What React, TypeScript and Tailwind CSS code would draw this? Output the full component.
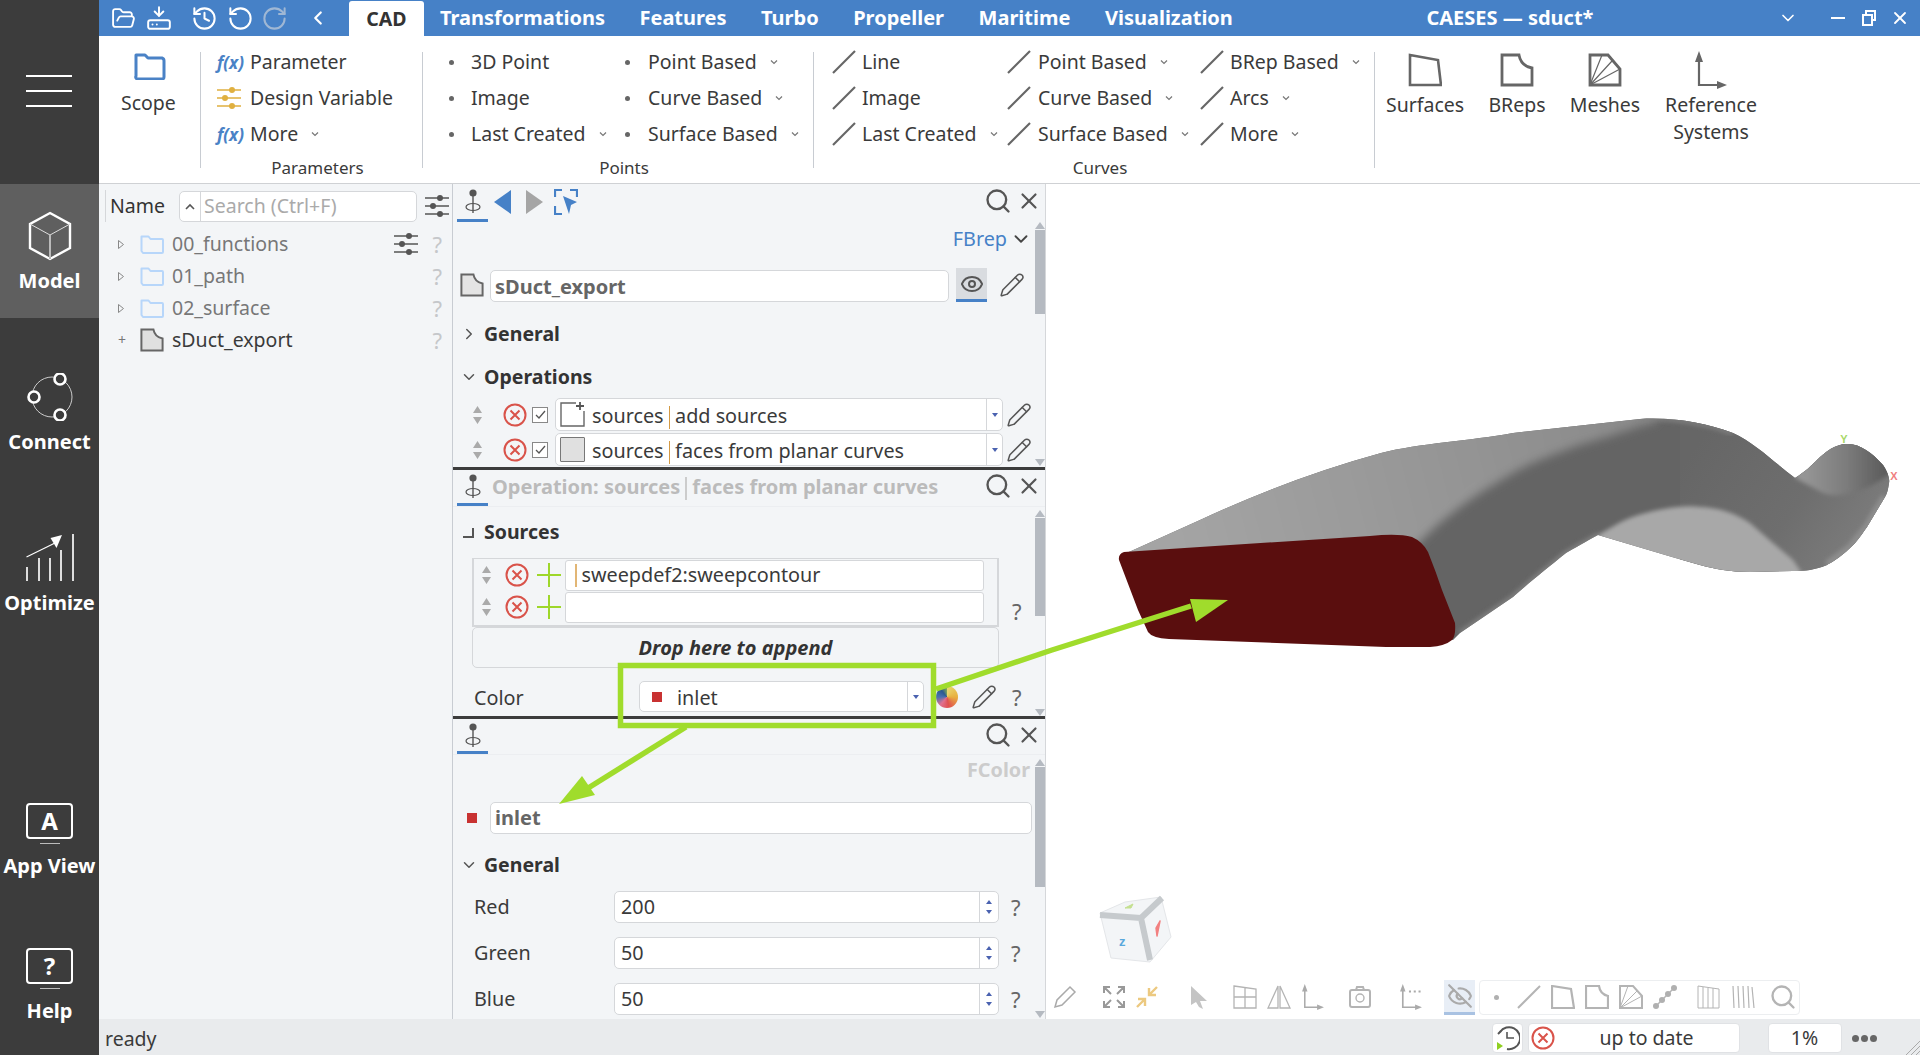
import type { ReactNode } from 'react';
import { Eye, EyeOff, FolderOpen, HardDriveDownload, History, Pencil, RotateCcw, RotateCw, Search, X, ChevronLeft, ChevronDown, ChevronRight } from 'lucide-react';

const Chev = ({ className = 'ml-[13px]' }: { className?: string }) => (
    <svg width="8" height="6" viewBox="0 0 8 6" className={className}>
        <path d="M1 1.5 4 4.5 7 1.5" fill="none" stroke="#777" strokeWidth="1.2" />
    </svg>
);

const Fx = () => <span className="italic font-bold text-[17px] text-[#4a82c6] leading-none">f(x)</span>;

const Dot = () => <span className="ml-[8px] block w-[5px] h-[5px] rounded-full bg-[#666]" />;

const Slash = () => (
    <svg width="24" height="24" viewBox="0 0 24 24">
        <path d="M1 23 23 1" stroke="#666" strokeWidth="2.2" />
    </svg>
);

const Sliders = ({ color = '#555' }: { color?: string }) => (
    <svg width="24" height="22" viewBox="0 0 24 22">
        <path d="M0 3h24M0 11h24M0 19h24" stroke={color} strokeWidth="1.4" />
        <circle cx="15" cy="3" r="3" fill={color} />
        <circle cx="8" cy="11" r="3" fill={color} />
        <circle cx="15" cy="19" r="3" fill={color} />
    </svg>
);

const RibbonRow = ({ icon, label, chev, box = 'w-[30px]' }: { icon: ReactNode; label: string; chev?: boolean; box?: string }) => (
    <div className="h-[36px] flex items-center whitespace-nowrap">
        <span className={`${box} flex items-center shrink-0`}>{icon}</span>
        <span>{label}</span>
        {chev && <Chev />}
    </div>
);

const GroupSep = () => <div className="mt-[16px] h-[116px] w-px bg-[#c8ccd2] shrink-0" />;

const SurfaceIcon = () => (
    <svg width="34" height="34" viewBox="0 0 34 34">
        <path d="M2 2 30 7 33 32 2 32Z" fill="none" stroke="#666" strokeWidth="2.6" />
    </svg>
);
const BrepIcon = ({ size = 34, fill = 'none' }: { size?: number; fill?: string }) => (
    <svg width={size} height={size} viewBox="0 0 34 34">
        <path d="M2 2H19Q21 13 32 15V32H2Z" fill={fill} stroke="#666" strokeWidth="2.8" />
    </svg>
);
const MeshIcon = () => (
    <svg width="34" height="34" viewBox="0 0 34 34">
        <path d="M2 2H20L32 16V32H2Z" fill="none" stroke="#666" strokeWidth="2.8" />
        <path d="M2 32 14 2M2 32 24 8M2 32 32 16" stroke="#666" strokeWidth="1.2" />
    </svg>
);
const AxesIcon = ({ w = 32, h = 38, color = '#666' }: { w?: number; h?: number; color?: string }) => (
    <svg width={w} height={h} viewBox="0 0 32 38">
        <path d="M4 10V34H26" fill="none" stroke={color} strokeWidth="2.2" />
        <path d="M4 0 8 11H0ZM32 34 22 38V30Z" fill={color} />
    </svg>
);

const BigTool = ({ icon, label, className }: { icon: ReactNode; label: ReactNode; className: string }) => (
    <div className={`${className} pt-[16px] flex flex-col items-center text-center leading-[27px]`}>
        <div className="h-[36px] flex items-center">{icon}</div>
        <div className="mt-[3px]">{label}</div>
    </div>
);

function Ribbon() {
    return (
        <div className="h-[148px] bg-white border-b border-[#cfd1d4] flex text-[19.5px] text-[#3a3a3a] shrink-0">
            <div className="w-[101px] pt-[16px] pl-[35px] shrink-0">
                <svg width="32" height="28" viewBox="0 0 32 28">
                    <path d="M2 24V3h9l3 3h14a3 3 0 0 1 2 3v16a2 2 0 0 1-2 2H4a2 2 0 0 1-2-3Z" fill="none" stroke="#4a82c6" strokeWidth="3" strokeLinejoin="round" />
                </svg>
                <div className="mt-[8px] -ml-[13px]">Scope</div>
            </div>
            <GroupSep />
            <div className="w-[221px] shrink-0">
                <div className="h-[116px] pt-[8px] pl-[16px]">
                    <RibbonRow box="w-[33px]" icon={<Fx />} label="Parameter" />
                    <RibbonRow box="w-[33px]" icon={<Sliders color="#e0b040" />} label="Design Variable" />
                    <RibbonRow box="w-[33px]" icon={<Fx />} label="More" chev />
                </div>
                <div className="mt-[4px] pl-[12px] text-center text-[17px] leading-[24px]">Parameters</div>
            </div>
            <GroupSep />
            <div className="w-[390px] shrink-0">
                <div className="h-[116px] pt-[8px] pl-[18px] flex">
                    <div className="w-[176px]">
                        <RibbonRow icon={<Dot />} label="3D Point" />
                        <RibbonRow icon={<Dot />} label="Image" />
                        <RibbonRow icon={<Dot />} label="Last Created" chev />
                    </div>
                    <div>
                        <RibbonRow box="w-[31px]" icon={<Dot />} label="Point Based" chev />
                        <RibbonRow box="w-[31px]" icon={<Dot />} label="Curve Based" chev />
                        <RibbonRow box="w-[31px]" icon={<Dot />} label="Surface Based" chev />
                    </div>
                </div>
                <div className="mt-[4px] pl-[12px] text-center text-[17px] leading-[24px]">Points</div>
            </div>
            <GroupSep />
            <div className="w-[560px] shrink-0">
                <div className="h-[116px] pt-[8px] pl-[18px] flex">
                    <div className="w-[175px]">
                        <RibbonRow icon={<Slash />} label="Line" />
                        <RibbonRow icon={<Slash />} label="Image" />
                        <RibbonRow icon={<Slash />} label="Last Created" chev />
                    </div>
                    <div className="w-[193px]">
                        <RibbonRow box="w-[31px]" icon={<Slash />} label="Point Based" chev />
                        <RibbonRow box="w-[31px]" icon={<Slash />} label="Curve Based" chev />
                        <RibbonRow box="w-[31px]" icon={<Slash />} label="Surface Based" chev />
                    </div>
                    <div>
                        <RibbonRow icon={<Slash />} label="BRep Based" chev />
                        <RibbonRow icon={<Slash />} label="Arcs" chev />
                        <RibbonRow icon={<Slash />} label="More" chev />
                    </div>
                </div>
                <div className="mt-[4px] pl-[12px] text-center text-[17px] leading-[24px]">Curves</div>
            </div>
            <GroupSep />
            <BigTool className="ml-[10px] w-[80px]" icon={<SurfaceIcon />} label="Surfaces" />
            <BigTool className="ml-[12px] w-[80px]" icon={<BrepIcon />} label="BReps" />
            <BigTool className="ml-[8px] w-[80px]" icon={<MeshIcon />} label="Meshes" />
            <BigTool className="ml-[16px] w-[100px]" icon={<AxesIcon />} label={<>Reference<br />Systems</>} />
        </div>
    );
}

function Header() {
    return (
        <div className="h-[36px] bg-[#4681c7] flex items-center text-white shrink-0">
            <div className="ml-[12px] flex items-center">
                <FolderOpen size={25} strokeWidth={1.8} />
                <HardDriveDownload size={26} strokeWidth={1.8} className="ml-[10px]" />
                <History size={27} strokeWidth={1.8} className="ml-[19px]" />
                <RotateCcw size={27} strokeWidth={1.8} className="ml-[9px]" />
                <RotateCw size={27} strokeWidth={1.8} className="ml-[7px] text-[#9fb7d4]" />
                <ChevronLeft size={22} strokeWidth={2.4} className="ml-[19px]" />
            </div>
            <div className="ml-[20px] w-[75px] h-[35px] mt-[1px] bg-white rounded-t-[3px] text-[#333] font-bold text-[19.5px] flex items-center justify-center">CAD</div>
            <div className="ml-[16px] flex gap-[34.5px] font-bold text-[20px]">
                <span>Transformations</span>
                <span>Features</span>
                <span>Turbo</span>
                <span>Propeller</span>
                <span>Maritime</span>
                <span>Visualization</span>
            </div>
            <div className="ml-[193.5px] font-bold text-[20px] whitespace-nowrap">CAESES — sduct*</div>
            <ChevronDown size={20} strokeWidth={2} className="ml-[185px]" />
            <span className="ml-[33px] w-[14px] h-[2px] bg-white" />
            <svg width="16" height="16" viewBox="0 0 16 16" className="ml-[16px]">
                <path d="M5 4V1h9v9h-3M2 5h9v10H2Z" fill="none" stroke="#fff" strokeWidth="2" />
            </svg>
            <X size={20} strokeWidth={2.2} className="ml-[13px]" />
        </div>
    );
}

const SideItem = ({ icon, label, className = '' }: { icon: ReactNode; label: string; className?: string }) => (
    <div className={`flex flex-col items-center text-white font-bold text-[20px] leading-[26px] ${className}`}>
        {icon}
        <span className="whitespace-nowrap">{label}</span>
    </div>
);

const ScreenIcon = ({ children }: { children: ReactNode }) => (
    <div className="flex flex-col items-center mb-[9px]">
        <div className="w-[47px] h-[36px] rounded-[4px] border-2 border-white flex items-center justify-center text-[24px] leading-none">{children}</div>
        <span className="mt-[4px] block w-[20px] h-[1px] bg-[#bbb]" />
    </div>
);

function Sidebar() {
    return (
        <aside className="w-[99px] h-full bg-[#3c3c3c] flex flex-col shrink-0">
            <div className="h-[184px] pt-[75px] pl-[26px]">
                <div className="w-[46px] h-[2px] bg-white" />
                <div className="mt-[13px] w-[46px] h-[2px] bg-white" />
                <div className="mt-[13px] w-[46px] h-[2px] bg-white" />
            </div>
            <SideItem
                className="h-[134px] bg-[#5f5f5f] pt-[27px]"
                icon={
                    <svg width="44" height="50" viewBox="0 0 44 50" className="mb-[7px]">
                        <path d="M22 2 42 13V37L22 48 2 37V13Z" fill="none" stroke="#fff" strokeWidth="2.4" />
                        <path d="M2 13 22 24 42 13" fill="none" stroke="#ddd" strokeWidth="1" />
                        <path d="M22 24V48" stroke="#bbb" strokeWidth="2" />
                    </svg>
                }
                label="Model"
            />
            <SideItem
                className="mt-[55px]"
                icon={
                    <svg width="48" height="48" viewBox="0 0 48 48" className="mb-[8px]">
                        <circle cx="26" cy="24" r="20" fill="none" stroke="#ccc" strokeWidth="1" />
                        <g fill="#3c3c3c" stroke="#fff" strokeWidth="2.6">
                            <circle cx="34" cy="6" r="5.5" />
                            <circle cx="8" cy="24" r="5.5" />
                            <circle cx="34" cy="42" r="5.5" />
                        </g>
                    </svg>
                }
                label="Connect"
            />
            <SideItem
                className="mt-[79px]"
                icon={
                    <svg width="48" height="48" viewBox="25 534 48 48" className="mb-[8px]">
                        <path d="M26 581V567M38 581V558M49 581V558M60 581V550M72 581V534" stroke="#ddd" strokeWidth="2" />
                        <path d="M25.5 557 54 543" stroke="#fff" strokeWidth="1.2" />
                        <path d="M61 535 49.5 538 55.5 548Z" fill="#fff" />
                    </svg>
                }
                label="Optimize"
            />
            <SideItem className="mt-[187px]" icon={<ScreenIcon>A</ScreenIcon>} label="App View" />
            <SideItem className="mt-[69px]" icon={<ScreenIcon>?</ScreenIcon>} label="Help" />
        </aside>
    );
}

const Q = ({ className = '', color = 'text-[#c5c7ca]' }: { className?: string; color?: string }) => (
    <span className={`${color} text-[22px] leading-none ${className}`}>?</span>
);

const TreeFolder = () => (
    <svg width="24" height="20" viewBox="0 0 24 20">
        <path d="M1.5 17V2.5h7l2 2.5H22a1 1 0 0 1 1 1V18a1 1 0 0 1-1 1H3Z" fill="none" stroke="#b7d6fa" strokeWidth="2" strokeLinejoin="round" />
    </svg>
);

const TreeRow = ({ label, folder, last, sliders }: { label: string; folder?: boolean; last?: boolean; sliders?: boolean }) => (
    <div className="h-[32px] flex items-center">
        <span className="w-[19px] ml-[19px] flex items-center">
            {last ? (
                <span className="text-[#777] text-[14px] leading-none">+</span>
            ) : (
                <svg width="6" height="9" viewBox="0 0 6 9">
                    <path d="M.5.5 5.5 4.5.5 8.5Z" fill="none" stroke="#888" />
                </svg>
            )}
        </span>
        <span className="ml-[3px] w-[32px] flex">{folder ? <TreeFolder /> : <BrepIcon size={24} fill="#e0e0e0" />}</span>
        <span className={folder ? 'text-[#777]' : 'text-[#3a3a3a]'}>{label}</span>
        <span className="ml-auto w-[24px] flex">{sliders && <Sliders />}</span>
        <Q className="ml-[14px] mr-[10px]" />
    </div>
);

function Tree() {
    return (
        <div className="w-[354px] shrink-0 border-r border-[#c8ccd2] text-[19.5px]">
            <div className="h-[38px] pt-[6px] flex items-center">
                <span className="ml-[6px] w-px h-[32px] bg-[#d5d7da]" />
                <span className="ml-[4px] text-[#333]">Name</span>
                <div className="ml-[14px] w-[238px] h-[31px] bg-white border border-[#d5d7da] rounded-[5px] flex items-center">
                    <span className="w-[21px] h-full border-r border-[#d5d7da] flex items-center justify-center">
                        <svg width="10" height="7" viewBox="0 0 10 7">
                            <path d="M1 6 5 2 9 6" fill="none" stroke="#555" strokeWidth="1.6" />
                        </svg>
                    </span>
                    <span className="ml-[3px] text-[#aaa]">Search (Ctrl+F)</span>
                </div>
                <span className="ml-[8px] flex"><Sliders /></span>
            </div>
            <div className="mt-[6px]">
                <TreeRow label="00_functions" folder sliders />
                <TreeRow label="01_path" folder />
                <TreeRow label="02_surface" folder />
                <TreeRow label="sDuct_export" last />
            </div>
        </div>
    );
}

const Anchor = () => (
    <svg width="16" height="25" viewBox="0 0 16 25">
        <circle cx="8" cy="4" r="3.6" fill="#555" />
        <path d="M8 7V24" stroke="#555" strokeWidth="1.4" />
        <ellipse cx="8" cy="18" rx="7" ry="3.5" fill="none" stroke="#555" strokeWidth="1.2" />
    </svg>
);

const Tools = ({ h, children }: { h: string; children?: ReactNode }) => (
    <div className={`${h} flex items-stretch shrink-0`}>
        <div className="ml-[4px] w-[31px] border-b-3 border-[#4681c7] flex items-center justify-center"><Anchor /></div>
        {children}
        <div className="ml-auto flex items-center text-[#555] -mt-[4px]">
            <Search size={28} strokeWidth={2} />
            <X size={26} strokeWidth={2} className="ml-[4px] mr-[3px]" />
        </div>
    </div>
);

const ScrollCol = ({ top, thumb, spacer }: { top: string; thumb: string; spacer?: string }) => (
    <div className={`w-[10px] shrink-0 flex flex-col items-center ${top} ${spacer ?? ''}`}>
        <span className="block border-x-[5px] border-x-transparent border-b-[7px] border-b-[#b5bac1]" />
        <span className={`block w-[10px] bg-[#b5bac1] ${thumb}`} />
        <span className="mt-auto block border-x-[5px] border-x-transparent border-t-[7px] border-t-[#b5bac1]" />
    </div>
);

const SectionHead = ({ open, label, className = '' }: { open?: boolean; label: string; className?: string }) => (
    <div className={`h-[24px] flex items-center font-bold text-[19.5px] text-[#333] ${className}`}>
        <span className="w-[31px] pl-[7px] flex">
            {open ? <ChevronDown size={18} strokeWidth={2} className="text-[#555]" /> : <ChevronRight size={18} strokeWidth={2} className="text-[#555]" />}
        </span>
        {label}
    </div>
);

const RedX = ({ size = 24 }: { size?: number }) => (
    <svg width={size} height={size} viewBox="0 0 24 24">
        <circle cx="12" cy="12" r="10.5" fill="none" stroke="#d9534a" strokeWidth="2" />
        <path d="M7.5 7.5 16.5 16.5M16.5 7.5 7.5 16.5" stroke="#d9534a" strokeWidth="2" />
    </svg>
);

const UpDown = () => (
    <svg width="11" height="18" viewBox="0 0 11 18">
        <path d="M5.5 0 10 7H1ZM5.5 18 1 11H10Z" fill="#aaa" />
    </svg>
);

const MiniDrop = () => (
    <svg width="6" height="4" viewBox="0 0 6 4">
        <path d="M0 0H6L3 4Z" fill="#4a62b0" />
    </svg>
);

const Pen = ({ color = '#555', size = 26 }: { color?: string; size?: number }) => (
    <Pencil size={size} strokeWidth={1.4} color={color} />
);

const OpRow = ({ icon, label }: { icon: ReactNode; label: ReactNode }) => (
    <div className="h-[33px] flex items-center shrink-0">
        <span className="ml-[19px] flex"><UpDown /></span>
        <span className="ml-[20px] flex"><RedX /></span>
        <span className="ml-[5px] w-[16px] h-[16px] border border-[#888] bg-white flex items-center justify-center">
            <svg width="12" height="12" viewBox="0 0 12 12"><path d="M2 6 5 9 11 2" fill="none" stroke="#555" strokeWidth="1.3" /></svg>
        </span>
        <div className="ml-[7px] w-[448px] h-[33px] bg-white border border-[#d5d7da] rounded-[5px] flex items-center">
            <span className="ml-[4px] w-[25px] h-[25px] flex">{icon}</span>
            <span className="ml-[7px] pt-[2px] text-[#3a3a3a] whitespace-nowrap">{label}</span>
            <span className="ml-auto w-[16px] h-full border-l border-[#d5d7da] flex items-center justify-center"><MiniDrop /></span>
        </div>
        <span className="ml-[3px] flex"><Pen /></span>
    </div>
);

const Bar = () => <span className="inline-block w-[1.5px] h-[23px] mx-[5px] align-middle bg-[#d39a45]" />;

const SourceRow = ({ text }: { text?: ReactNode }) => (
    <div className="h-[32px] flex items-center">
        <span className="ml-[7px] flex"><UpDown /></span>
        <span className="ml-[13px] flex"><RedX /></span>
        <svg width="24" height="24" viewBox="0 0 24 24" className="ml-[8px]">
            <path d="M12 0V24M0 12H24" stroke="#9ed72a" strokeWidth="2" />
        </svg>
        <div className="ml-[4px] w-[419px] h-[31px] bg-white border border-[#d5d7da] rounded-[3px] pl-[9px] flex items-center whitespace-nowrap">{text}</div>
    </div>
);

const NumRow = ({ label, value, className = '' }: { label: string; value: string; className?: string }) => (
    <div className={`h-[32px] flex items-center shrink-0 ${className}`}>
        <span className="ml-[21px] w-[140px] text-[#3a3a3a]">{label}</span>
        <div className="w-[385px] h-[32px] bg-white border border-[#d5d7da] rounded-[5px] pl-[6px] flex items-center">
            {value}
            <span className="ml-auto w-[19px] h-full border-l border-[#d5d7da] flex flex-col items-center justify-around py-[5px]">
                <span className="rotate-180 flex"><MiniDrop /></span>
                <MiniDrop />
            </span>
        </div>
        <Q className="ml-[12px]" color="text-[#666]" />
    </div>
);

function Inspector() {
    return (
        <div className="w-[593px] shrink-0 border-r border-[#d5d7da] flex flex-col text-[19.8px] text-[#3a3a3a]">
            {/* object panel */}
            <div className="h-[283px] flex flex-col shrink-0 overflow-hidden">
                <Tools h="h-[38px]">
                    <svg width="18" height="24" viewBox="0 0 18 24" className="ml-[6px] self-center -mt-[2px]"><path d="M17 0V24L0 12Z" fill="#4681c7" /></svg>
                    <svg width="18" height="24" viewBox="0 0 18 24" className="ml-[13px] self-center -mt-[2px]"><path d="M1 0V24L18 12Z" fill="#a5a5a5" /></svg>
                    <svg width="24" height="26" viewBox="0 0 24 26" className="ml-[11px] self-center -mt-[2px]">
                        <path d="M1 8V1H8M16 1H23V8M1 17V25H8" fill="none" stroke="#4681c7" strokeWidth="2.2" />
                        <path d="M9 7 23 13 17 16 15 25Z" fill="#4681c7" />
                    </svg>
                </Tools>
                <div className="flex-1 flex min-h-0">
                    <div className="w-[582px] shrink-0">
                        <div className="h-[32px] mt-[1px] flex items-center justify-end text-[#4681c7]">
                            FBrep
                            <ChevronDown size={22} strokeWidth={2} className="ml-[3px] mr-[3px] text-[#444]" />
                        </div>
                        <div className="mt-[13px] h-[34px] flex items-center">
                            <span className="ml-[7px] flex"><BrepIcon size={24} fill="#e4e4e4" /></span>
                            <div className="ml-[6px] mt-[2px] w-[459px] h-[32px] pt-[1px] bg-white border border-[#d5d7da] rounded-[5px] pl-[4px] flex items-center font-bold text-[20px] text-[#666]">sDuct_export</div>
                            <div className="ml-[7px] w-[31px] h-[34px] bg-[#d9dce0] border-b-3 border-[#4681c7] flex items-center justify-center"><Eye size={24} strokeWidth={2} color="#555" /></div>
                            <span className="ml-[12px] flex"><Pen /></span>
                        </div>
                        <SectionHead label="General" className="mt-[20px]" />
                        <SectionHead open label="Operations" className="mt-[19px]" />
                        <div className="mt-[9px] flex flex-col gap-[2px]">
                            <OpRow
                                icon={
                                    <svg width="25" height="25" viewBox="0 0 25 25">
                                        <path d="M16 1H1V24H24V9" fill="none" stroke="#666" strokeWidth="1.4" />
                                        <path d="M20 0V8M16 4H24" stroke="#555" strokeWidth="1.8" />
                                    </svg>
                                }
                                label={<>sources<Bar />add sources</>}
                            />
                            <OpRow icon={<span className="block w-[25px] h-[25px] bg-[#e0e0e0] border border-[#777] rounded-[1px]" />} label={<>sources<Bar />faces from planar curves</>} />
                        </div>
                    </div>
                    <ScrollCol top="pt-[0px]" thumb="h-[84px] mt-[1px]" spacer="pb-[1px]" />
                </div>
            </div>
            <div className="h-[3px] bg-[#3c3c3c] shrink-0" />

            {/* operation panel */}
            <div className="h-[246px] flex flex-col shrink-0 overflow-hidden">
                <Tools h="h-[36px]">
                    <span className="ml-[4px] font-bold text-[20px] text-[#bbb] whitespace-nowrap self-center -mt-[2px]">Operation: sources<span className="inline-block w-[2px] h-[23px] mx-[5px] align-middle bg-[#ccc]" />faces from planar curves</span>
                </Tools>
                <div className="flex-1 flex min-h-0 border-t border-[#eceef1]">
                    <div className="w-[582px] shrink-0">
                        <div className="mt-[13px] h-[24px] flex items-center font-bold text-[19.5px] text-[#333]">
                            <span className="ml-[10px] w-[21px] flex">
                                <svg width="11" height="11" viewBox="0 0 11 11"><path d="M0 10H10V1" fill="none" stroke="#555" strokeWidth="2" /></svg>
                            </span>
                            Sources
                        </div>
                        <div className="mt-[14px] flex items-end">
                            <div className="ml-[19px] w-[527px] h-[69px] border-2 border-t-1 border-[#d5d7da]">
                                <SourceRow text={<><span className="inline-block w-[1.5px] h-[23px] mr-[5px] bg-[#e2b675]" />sweepdef2:sweepcontour</>} />
                                <SourceRow />
                            </div>
                            <Q className="ml-[13px] mb-[5px]" color="text-[#666]" />
                        </div>
                        <div className="ml-[19px] w-[527px] h-[41px] border border-[#d5d7da] rounded-[5px] flex items-center justify-center font-bold italic text-[20px] text-[#333]">Drop here to append</div>
                        <div className="mt-[13px] h-[31px] flex items-center">
                            <span className="ml-[21px] w-[165px] pt-[2px]">Color</span>
                            <div className="w-[285px] h-[31px] bg-white border border-[#d5d7da] rounded-[5px] flex items-center">
                                <span className="ml-[12px] w-[10px] h-[10px] bg-[#c83232]" />
                                <span className="ml-[15px] pt-[2px]">inlet</span>
                                <span className="ml-auto w-[16px] h-full border-l border-[#d5d7da] flex items-center justify-center"><MiniDrop /></span>
                            </div>
                            <span className="ml-[12px] w-[22px] h-[22px] rounded-full bg-[conic-gradient(#e8d870_0deg,#e8b040_90deg,#e05050_170deg,#e07090_220deg,#4a70b0_270deg,#2a5a90_320deg,#80a858_360deg)]" />
                            <span className="ml-[13px] flex"><Pen /></span>
                            <Q className="ml-[15px]" color="text-[#666]" />
                        </div>
                    </div>
                    <ScrollCol top="pt-[3px]" thumb="h-[98px] mt-[1px]" />
                </div>
            </div>
            <div className="h-[3px] bg-[#3c3c3c] shrink-0" />

            {/* color panel */}
            <div className="flex-1 flex flex-col min-h-0 overflow-hidden">
                <Tools h="h-[35px]" />
                <div className="flex-1 flex min-h-0 border-t border-[#eceef1]">
                    <div className="w-[582px] shrink-0">
                        <div className="h-[24px] mt-[3px] pr-[5px] flex items-center justify-end font-bold text-[#ccc]">FColor</div>
                        <div className="mt-[20px] h-[32px] flex items-center">
                            <span className="ml-[14px] w-[10px] h-[10px] bg-[#c83232]" />
                            <div className="ml-[13px] w-[542px] h-[32px] bg-white border border-[#d5d7da] rounded-[5px] pl-[4px] flex items-center font-bold text-[20px] text-[#666]">inlet</div>
                        </div>
                        <SectionHead open label="General" className="mt-[19px]" />
                        <NumRow label="Red" value="200" className="mt-[14px]" />
                        <NumRow label="Green" value="50" className="mt-[14px]" />
                        <NumRow label="Blue" value="50" className="mt-[14px]" />
                    </div>
                    <ScrollCol top="pt-[4px]" thumb="h-[120px] mt-[1px]" spacer="pb-[1px]" />
                </div>
            </div>
        </div>
    );
}

function Duct() {
    const outline =
        'M1120 556 L1200 520 Q1290 478 1381 453 C1420 443 1470 441 1513 433 L1640 419 C1675 417 1705 423 1733 433 C1755 443 1775 463 1795 478 C1805 472 1812 465 1817 460 C1825 452 1835 444 1847 444 C1858 443 1872 452 1883 465 C1888 472 1890 480 1889 483 C1888 490 1887 494 1885 497 L1867 527 C1860 537 1855 544 1850 548 C1840 558 1830 563 1827 565 C1815 570 1805 571 1793 571 L1750 572 C1730 572 1715 569 1700 565 L1672 557 L1598 535 C1585 542 1575 548 1566 553 C1545 570 1530 582 1513 597 L1460 633 L1453 640 L1200 640 Z';
    return (
        <svg viewBox="1046 184 874 835" className="absolute inset-0 w-full h-full">
            <defs>
                <clipPath id="ductClip"><path d={outline} /></clipPath>
                <linearGradient id="topG" gradientUnits="userSpaceOnUse" x1="1180" y1="540" x2="1640" y2="420">
                    <stop offset="0" stopColor="#a4a4a4" />
                    <stop offset="0.55" stopColor="#969696" />
                    <stop offset="1" stopColor="#8a8a8a" />
                </linearGradient>
                <linearGradient id="capG" gradientUnits="userSpaceOnUse" x1="1805" y1="470" x2="1885" y2="470">
                    <stop offset="0" stopColor="#959595" />
                    <stop offset="0.5" stopColor="#7d7d7d" />
                    <stop offset="1" stopColor="#5c5c5c" />
                </linearGradient>
                <linearGradient id="tubeG" gradientUnits="userSpaceOnUse" x1="1700" y1="440" x2="1860" y2="550">
                    <stop offset="0" stopColor="#666" />
                    <stop offset="0.6" stopColor="#6e6e6e" />
                    <stop offset="1" stopColor="#7c7c7c" />
                </linearGradient>
                <filter id="soft" x="-20%" y="-20%" width="140%" height="140%"><feGaussianBlur stdDeviation="5" /></filter>
                <filter id="soft2" x="-20%" y="-20%" width="140%" height="140%"><feGaussianBlur stdDeviation="2" /></filter>
            </defs>
            <g clipPath="url(#ductClip)">
                <rect x="1100" y="400" width="800" height="260" fill="#646464" />
                <path d="M1680 400H1900V600H1680Z" fill="url(#tubeG)" />
                {/* end of the tube, behind the fold */}
                <path d="M1795 478 L1823 493 C1840 500 1870 490 1895 470 L1895 430 L1810 430Z" fill="url(#capG)" filter="url(#soft2)" />
                <path d="M1885 497 L1867 527 L1850 548 L1827 565" fill="none" stroke="#8e8e8e" strokeWidth="8" filter="url(#soft2)" />
                {/* light top surface */}
                <path d="M1100 560 L1120 400 L1656 400 L1656 422 C1640 425 1630 430 1619 433 C1600 440 1585 442 1566 450 C1550 456 1530 463 1513 473 C1495 484 1480 492 1460 507 C1450 515 1440 522 1429 533 L1400 560 Z" fill="url(#topG)" filter="url(#soft)" />
                <path d="M1640 419 C1675 417 1705 423 1733 433" fill="none" stroke="#808080" strokeWidth="4" filter="url(#soft2)" />
                {/* underside */}
                <path d="M1598 535 L1619 523 C1640 512 1680 504 1700 507 C1720 508 1735 513 1750 523 L1773 543 L1793 560 L1810 585 L1590 590Z" fill="#a8a8a8" filter="url(#soft2)" />
                <path d="M1460 633 L1513 597 C1530 582 1545 570 1566 553 L1598 535" fill="none" stroke="#808080" strokeWidth="5" filter="url(#soft2)" />
            </g>
            {/* inlet face */}
            <path d="M1119 560 Q1118 554 1124 552 L1370 536 Q1398 533 1412 537 Q1423 542 1428 552 Q1436 572 1442 590 L1455 623 Q1456 636 1452 640 Q1445 646 1430 647 L1386 647 L1169 639 Q1152 638 1148 632 L1138 610Z" fill="#5a0e0e" />
            <text x="1844" y="443" textAnchor="middle" fontSize="11" fontWeight="700" fill="#a8d868" fontFamily="Liberation Sans, sans-serif">Y</text>
            <text x="1894" y="480" textAnchor="middle" fontSize="11" fontWeight="700" fill="#f08080" fontFamily="Liberation Sans, sans-serif">X</text>
            {/* view cube */}
            <g strokeLinejoin="round">
                <path d="M1100 913 1125 902 1161 897 1171 937 1150 962 1111 958Z" fill="#f3f5f7" stroke="#e4e6e9" />
                <path d="M1100 915 1141 918 1150 960M1141 918 1162 898" fill="none" stroke="#c6cacd" strokeWidth="6" />
                <text x="1119" y="946" fontSize="13" fontWeight="700" fill="#5aa8dc" fontFamily="Liberation Sans, sans-serif">z</text>
                <path d="M1160 921 1157 936 1156 928Z" fill="#f28080" stroke="#f28080" strokeWidth="1.5" />
                <path d="M1125 908 1133 904 1131 908Z" fill="#c4e090" stroke="#c4e090" />
            </g>
        </svg>
    );
}

const GhostPath = ({ children, w = 24 }: { children: ReactNode; w?: number }) => (
    <svg width={w} height="24" viewBox={`0 0 ${w} 24`} fill="none" stroke="#b4b4b4" strokeWidth="2">{children}</svg>
);

function ViewTools() {
    return (
        <div className="relative mt-auto h-[38px] mb-[3px] flex items-center">
            <span className="ml-[7px] flex"><GhostPath><path d="M2 22 4 15 17 2 22 7 9 20Z" strokeWidth="1.5" stroke="#aaa" /></GhostPath></span>
            <span className="ml-[25px] flex">
                <GhostPath><path d="M2 8V2H8M16 2H22V8M2 16V22H8M16 22H22V16M3 3 9 9M21 3 15 9M3 21 9 15M21 21 15 15" strokeWidth="2" stroke="#999" /></GhostPath>
            </span>
            <span className="ml-[9px] flex">
                <GhostPath><path d="M22 2 14 10M14 3V10H21M2 22 10 14M10 21V14H3" stroke="#ecc980" strokeWidth="2.4" /></GhostPath>
            </span>
            <span className="ml-[28px] flex"><GhostPath><path d="M4 1 20 16 13 16 16 24 12 22 9 17 4 20Z" fill="#c4c4c4" stroke="none" /></GhostPath></span>
            <span className="ml-[22px] flex"><GhostPath><path d="M1 1 23 4V23H1ZM12 3V23M1 12H23" strokeWidth="1.3" /></GhostPath></span>
            <span className="ml-[10px] flex"><GhostPath><path d="M11 1 1 23H11ZM13 1 23 23H13Z" strokeWidth="1.3" /></GhostPath></span>
            <span className="ml-[10px] flex"><AxesIcon w={24} h={26} color="#aaa" /></span>
            <span className="ml-[23px] flex">
                <GhostPath><rect x="2" y="5" width="20" height="17" rx="2" /><path d="M8 5 9 2H15L16 5" /><circle cx="12" cy="13" r="4" strokeWidth="1.4" /></GhostPath>
            </span>
            <span className="ml-[26px] flex">
                <svg width="26" height="26" viewBox="0 0 32 38">
                    <path d="M4 10V34H26" fill="none" stroke="#aaa" strokeWidth="2.4" />
                    <path d="M4 0 8 11H0ZM32 34 22 38V30Z" fill="#aaa" />
                    <path d="M13 11h3M20 11h3M27 11h3" stroke="#aaa" strokeWidth="3" />
                </svg>
            </span>
            <div className="ml-[20px] w-[31px] h-[35px] bg-[#e8eef6] border-b-3 border-[#a9c2e2] flex items-center justify-center"><EyeOff size={26} strokeWidth={2} color="#aaa" /></div>
            <div className="ml-[4px] w-[321px] h-[35px] border border-[#eceef0] rounded-[4px] flex items-center">
                <span className="ml-[14px] w-[5px] h-[5px] rounded-full bg-[#b0b0b0]" />
                <span className="ml-[18px] flex"><GhostPath><path d="M1 23 23 1" /></GhostPath></span>
                <span className="ml-[10px] flex"><GhostPath><path d="M1 1 20 4 23 23H1Z" strokeWidth="2.2" /></GhostPath></span>
                <span className="ml-[10px] flex"><GhostPath><path d="M1 1H14Q15 9 23 11V23H1Z" strokeWidth="2.2" /></GhostPath></span>
                <span className="ml-[10px] flex"><GhostPath><path d="M1 1H14L23 11V23H1Z" strokeWidth="2" /><path d="M1 23 9 1M1 23 18 6M1 23 23 11" strokeWidth="1" /></GhostPath></span>
                <span className="ml-[10px] flex">
                    <GhostPath><path d="M3 21 21 3" strokeWidth="1.4" /><g fill="#b0b0b0" stroke="none"><circle cx="3" cy="21" r="3" /><circle cx="9" cy="15" r="3" /><circle cx="15" cy="9" r="3" /><circle cx="21" cy="3" r="3" /></g></GhostPath>
                </span>
                <span className="ml-[20px] flex"><GhostPath><path d="M1 1 22 4V23H1ZM6 2V23M11 3V23M16 3V23" strokeWidth="1" /></GhostPath></span>
                <span className="ml-[10px] flex"><GhostPath><path d="M2 1 3 23M7 1 8 23M12 1 13 23M17 1 18 23M21 2 23 23" strokeWidth="1.2" /></GhostPath></span>
                <span className="ml-[14px] flex"><Search size={28} strokeWidth={2} color="#b4b4b4" /></span>
            </div>
        </div>
    );
}

function StatusBar() {
    return (
        <div className="h-[36px] pt-[2px] bg-[#e9ebed] flex items-center text-[19.5px] text-[#3a3a3a] shrink-0 relative">
            <span className="ml-[6px] pt-[1px]">ready</span>
            <div className="ml-[1335px] w-[31px] h-[30px] bg-white border border-[#e0e2e5] rounded-[4px] relative flex items-center justify-center">
                <svg width="25" height="26" viewBox="0 0 25 26">
                    <path d="M5 7A11 11 0 1 1 12 24" fill="none" stroke="#555" strokeWidth="2" />
                    <path d="M6 6 3 9" stroke="#555" strokeWidth="2" />
                    <path d="M12 7V13H19" fill="none" stroke="#555" strokeWidth="1.6" />
                    <path d="M2 17V25L8 21Z" fill="#8fd020" />
                </svg>
            </div>
            <div className="ml-[5px] w-[212px] h-[30px] bg-white border border-[#e0e2e5] rounded-[4px] flex items-center">
                <span className="ml-[2px] flex"><RedX /></span>
                <span className="flex-1 text-center">up to date</span>
            </div>
            <div className="ml-[28px] w-[74px] h-[30px] bg-white border border-[#e0e2e5] rounded-[4px] flex items-center justify-center">1%</div>
            <div className="ml-[10px] flex gap-[2px]">
                <span className="w-[7px] h-[7px] rounded-full bg-[#666]" />
                <span className="w-[7px] h-[7px] rounded-full bg-[#666]" />
                <span className="w-[7px] h-[7px] rounded-full bg-[#666]" />
            </div>
            <svg width="14" height="14" viewBox="0 0 14 14" className="absolute right-0 bottom-0">
                <path d="M0 14 14 0M5 14 14 5M10 14 14 10" stroke="#aaa" strokeWidth="1" />
            </svg>
        </div>
    );
}

// green annotation drawn over the panels
function Callouts() {
    return (
        <svg viewBox="0 0 1920 1055" className="absolute inset-0 w-[1920px] h-[1055px] pointer-events-none">
            <rect x="620.5" y="665.5" width="313" height="60" fill="none" stroke="#a0dc2c" strokeWidth="5.5" />
            <path d="M936 689 1052 650 1191 606" stroke="#a0dc2c" strokeWidth="5.5" />
            <path d="M1228 600 1190 599 1196 622Z" fill="#a0dc2c" />
            <path d="M686 727 585 790" stroke="#a0dc2c" strokeWidth="5.5" />
            <path d="M559 804 582 776 595 795Z" fill="#a0dc2c" />
        </svg>
    );
}

export default function App() {
    return (
        <div className="relative w-[1920px] h-[1055px] flex overflow-hidden bg-[#f3f5f7] font-['Noto_Sans',sans-serif]">
            <Sidebar />
            <div className="flex-1 min-w-0 flex flex-col">
                <Header />
                <Ribbon />
                <div className="flex-1 min-h-0 flex">
                    <Tree />
                    <Inspector />
                    <div className="relative flex-1 min-w-0 bg-white flex flex-col">
                        <Duct />
                        <ViewTools />
                    </div>
                </div>
                <StatusBar />
            </div>
            <Callouts />
        </div>
    );
}
